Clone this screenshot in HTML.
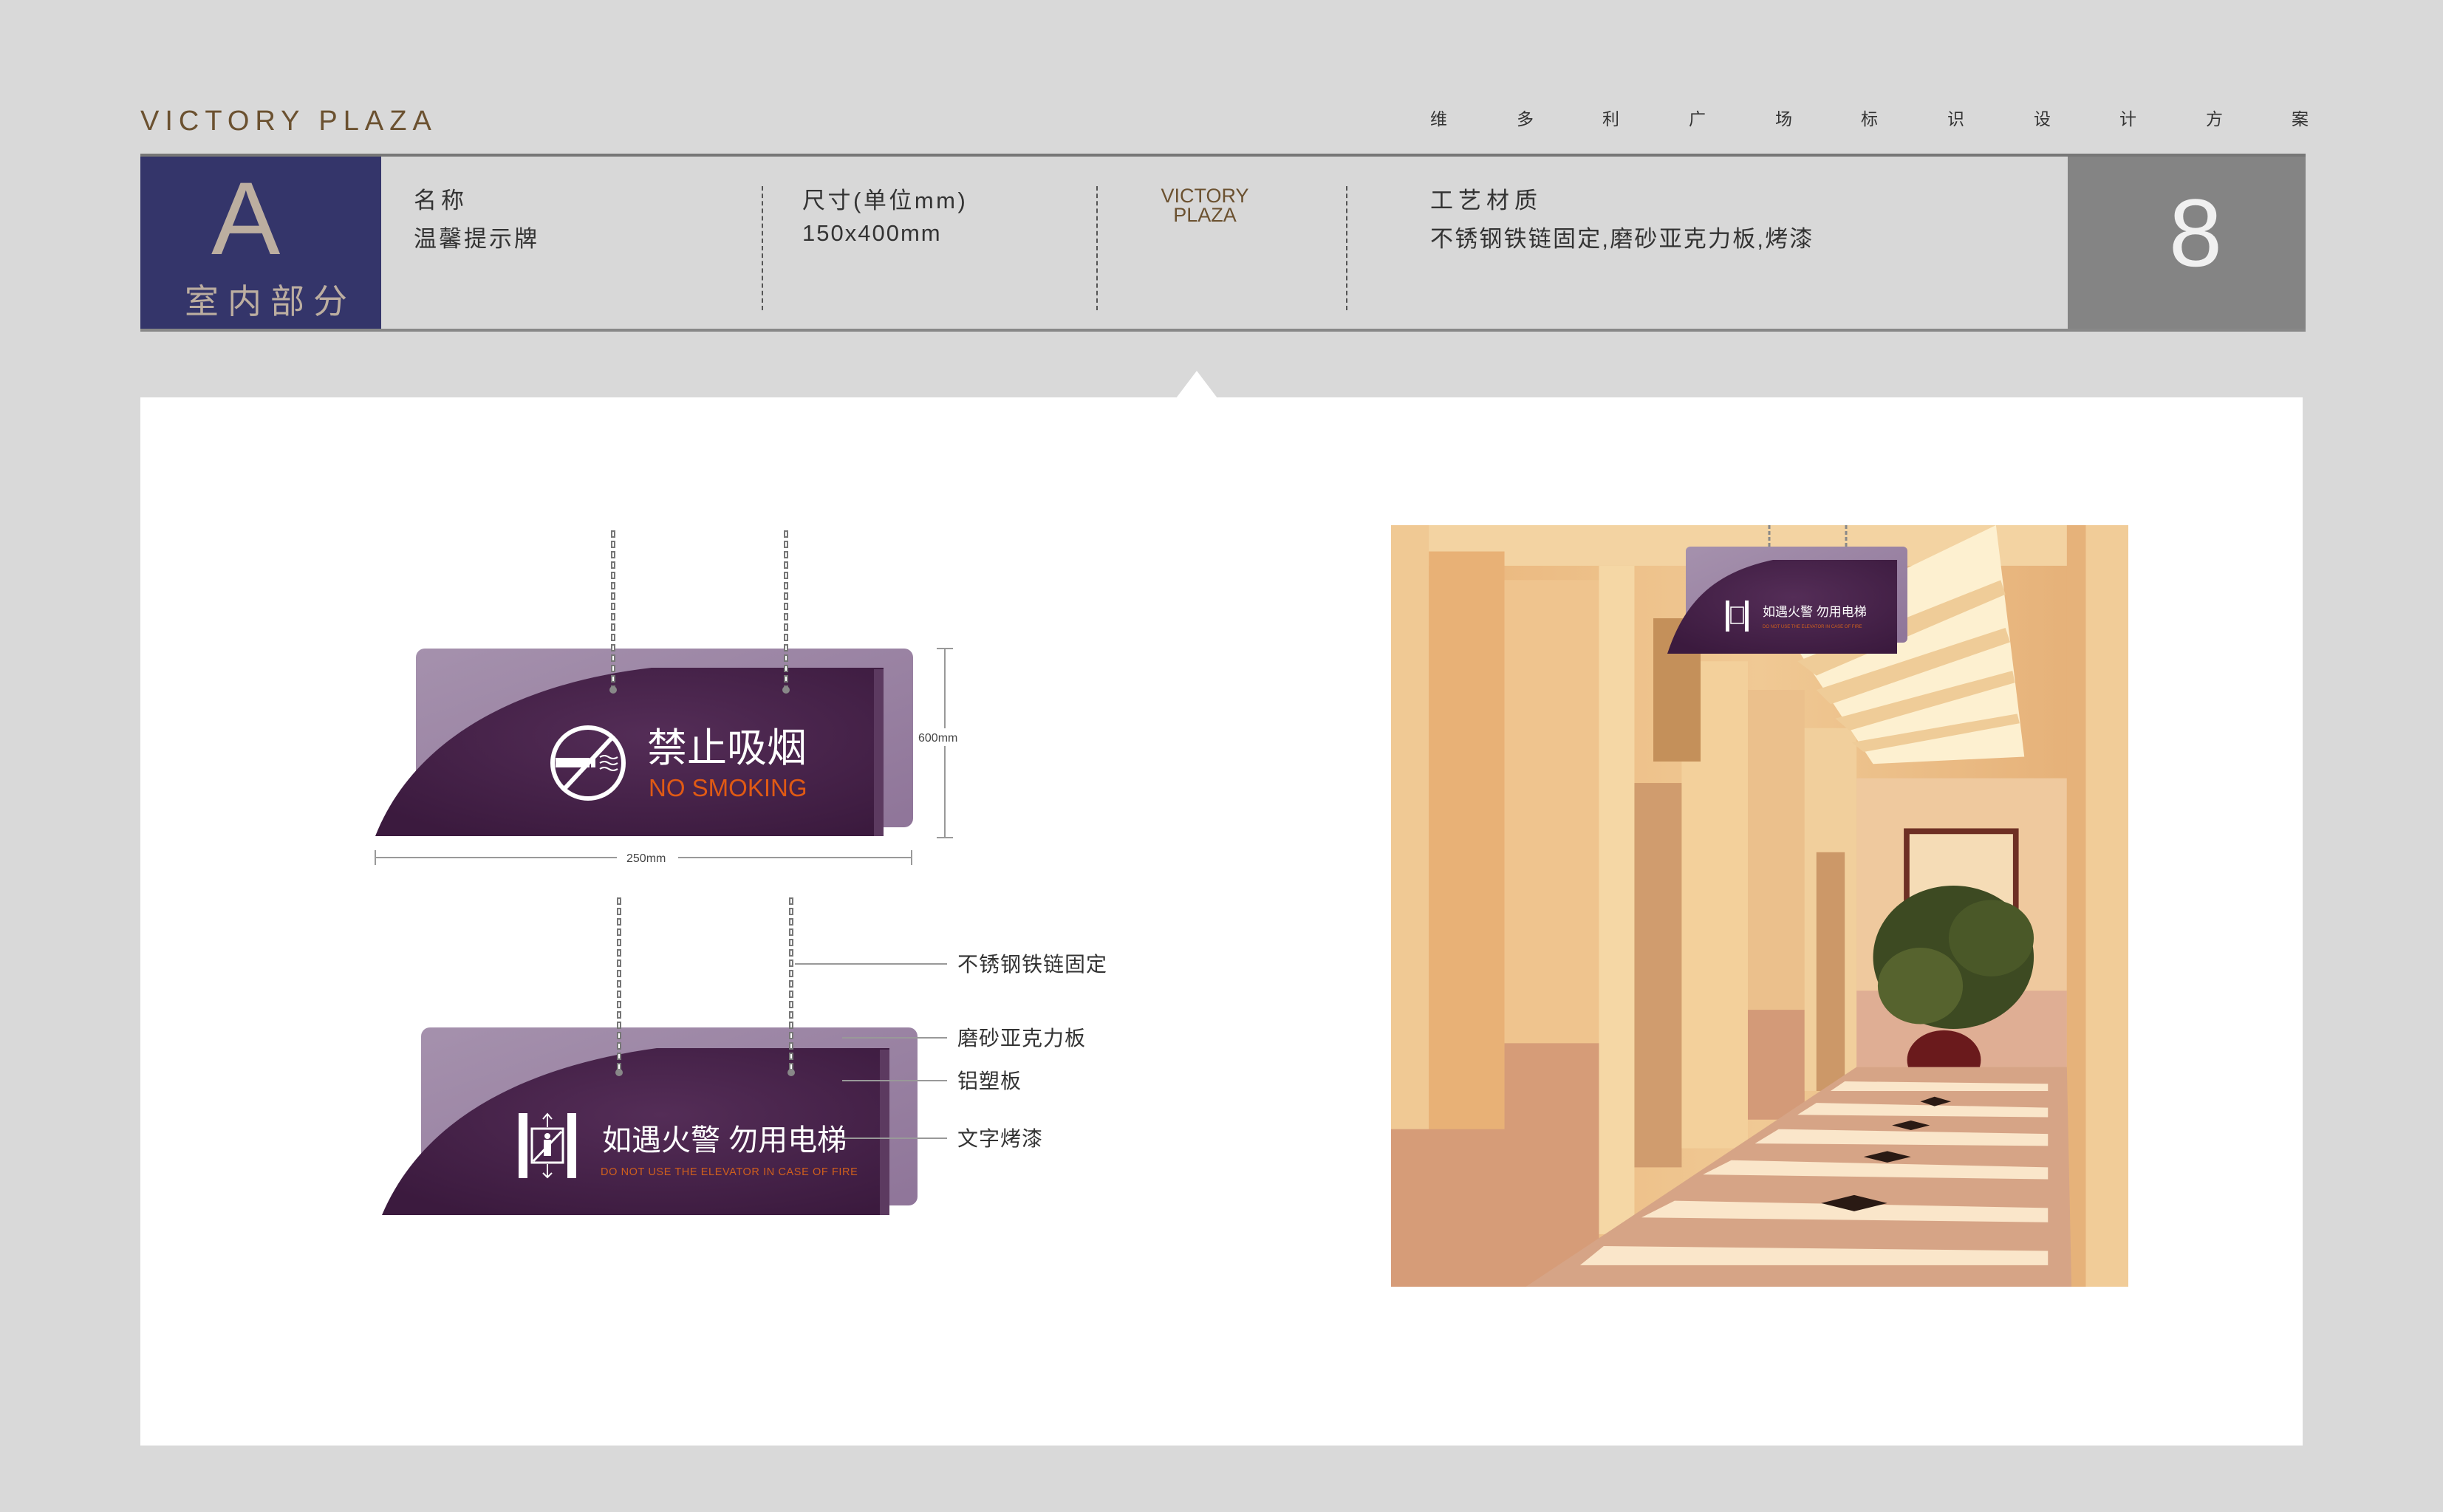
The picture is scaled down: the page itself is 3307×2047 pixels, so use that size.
<!DOCTYPE html>
<html><head><meta charset="utf-8">
<style>
*{margin:0;padding:0;box-sizing:border-box}
body{width:3307px;height:2047px;background:#d9d9d9;position:relative;overflow:hidden;font-family:"Liberation Sans","Noto Sans CJK SC",sans-serif}
.a{position:absolute;white-space:nowrap}
.cn{font-family:"Liberation Sans","Noto Sans CJK SC",sans-serif}
</style></head><body>
<div class="a" style="left:190px;top:143px;font-size:38px;letter-spacing:8px;color:#6b5130;">VICTORY PLAZA</div>
<div class="a cn" style="left:0;top:142px;font-size:23px;color:#333;">
<span class="a" style="left:1936px">维</span><span class="a" style="left:2053px">多</span><span class="a" style="left:2169px">利</span><span class="a" style="left:2286px">广</span><span class="a" style="left:2403px">场</span><span class="a" style="left:2519px">标</span><span class="a" style="left:2636px">识</span><span class="a" style="left:2753px">设</span><span class="a" style="left:2869px">计</span><span class="a" style="left:2986px">方</span><span class="a" style="left:3102px">案</span></div>

<div class="a" style="left:190px;top:208px;width:2931px;height:241px;border-top:4px solid #777;border-bottom:4px solid #888;background:#d8d8d8"></div>
<div class="a" style="left:190px;top:212px;width:326px;height:233px;background:#34356a"></div>
<div class="a" style="left:286px;top:226px;font-size:140px;color:#bcaea0;line-height:1;">A</div>
<div class="a cn" style="left:250px;top:372px;font-size:46px;letter-spacing:12px;color:#bcaea0;">室内部分</div>
<div class="a cn" style="left:560px;top:246px;font-size:31px;letter-spacing:6px;color:#333">名称</div>
<div class="a cn" style="left:560px;top:298px;font-size:31px;letter-spacing:3px;color:#333">温馨提示牌</div>
<div class="a" style="left:1031px;top:252px;height:168px;border-left:2px dashed #555"></div>
<div class="a cn" style="left:1086px;top:246px;font-size:31px;letter-spacing:3.5px;color:#333">尺寸(单位mm)</div>
<div class="a" style="left:1086px;top:298px;font-size:31px;letter-spacing:2px;color:#333">150x400mm</div>
<div class="a" style="left:1484px;top:252px;height:168px;border-left:2px dashed #555"></div>
<div class="a" style="left:1560px;top:252px;width:142px;font-size:27px;line-height:26px;color:#6b5130;text-align:center">VICTORY<br>PLAZA</div>
<div class="a" style="left:1822px;top:252px;height:168px;border-left:2px dashed #555"></div>
<div class="a cn" style="left:1936px;top:246px;font-size:31px;letter-spacing:7px;color:#333">工艺材质</div>
<div class="a cn" style="left:1936px;top:298px;font-size:31px;letter-spacing:2.2px;color:#333">不锈钢铁链固定,磨砂亚克力板,烤漆</div>
<div class="a" style="left:2799px;top:212px;width:322px;height:233px;background:#848484"></div>
<div class="a" style="left:2799px;top:244px;width:346px;text-align:center;font-size:130px;color:#f0f0f0;line-height:1.1">8</div>

<div class="a" style="left:190px;top:538px;width:2927px;height:1419px;background:#fff"></div>
<div class="a" style="left:1592px;top:502px;width:0;height:0;border-left:28px solid transparent;border-right:28px solid transparent;border-bottom:37px solid #fff"></div>

<svg class="a" style="left:0;top:0" width="3307" height="2047" viewBox="0 0 3307 2047">
<defs>
<radialGradient id="pg" cx="0.55" cy="0.4" r="0.7"><stop offset="0" stop-color="#542d57"/><stop offset="1" stop-color="#3b1a3e"/></radialGradient>
<linearGradient id="bk" x1="0" y1="0" x2="1" y2="1"><stop offset="0" stop-color="#a591ad"/><stop offset="1" stop-color="#8f7599"/></linearGradient>
<linearGradient id="wall" x1="0" y1="0" x2="1" y2="0"><stop offset="0" stop-color="#e9b47a"/><stop offset="0.5" stop-color="#f0c994"/><stop offset="1" stop-color="#e4ad74"/></linearGradient>
</defs>

<!-- sign 1 -->
<rect x="563" y="878" width="673" height="242" rx="12" fill="url(#bk)"/>
<path d="M508,1132 C560,1000 700,925 882,904 L1196,904 L1196,1132 Z" fill="url(#pg)"/>
<rect x="1183" y="906" width="13" height="226" fill="#5c3a60"/>
<g stroke-width="6" stroke-dasharray="10 4" stroke="#777"><line x1="830" y1="718" x2="830" y2="930"/><line x1="1064" y1="718" x2="1064" y2="930"/></g>
<g stroke-width="2" stroke-dasharray="6 8" stroke="#fff"><line x1="830" y1="720" x2="830" y2="930"/><line x1="1064" y1="720" x2="1064" y2="930"/></g>
<circle cx="830" cy="934" r="5" fill="#888"/><circle cx="1064" cy="934" r="5" fill="#888"/>
<circle cx="796" cy="1033" r="48" fill="none" stroke="#fff" stroke-width="6"/>
<rect x="752" y="1026" width="46" height="13" fill="#fff"/><rect x="800" y="1026" width="6" height="13" fill="#fff"/>
<path d="M812,1025 q6,-4 12,0 t12,0 M812,1033 q6,-4 12,0 t12,0 M812,1041 q6,-4 12,0 t12,0" stroke="#fff" stroke-width="2" fill="none"/>
<line x1="763" y1="1069" x2="830" y2="997" stroke="#fff" stroke-width="6"/>
<text x="876" y="1031" font-size="54" fill="#fff" font-family="Liberation Sans,Noto Sans CJK SC,sans-serif">禁止吸烟</text>
<text x="878" y="1078" font-size="33" fill="#e05a14" font-family="Liberation Sans,sans-serif">NO SMOKING</text>
<line x1="1279" y1="878" x2="1279" y2="1134" stroke="#999" stroke-width="2"/>
<line x1="1268" y1="878" x2="1290" y2="878" stroke="#999" stroke-width="2"/><line x1="1268" y1="1134" x2="1290" y2="1134" stroke="#999" stroke-width="2"/>
<rect x="1240" y="986" width="70" height="24" fill="#fff"/>
<text x="1243" y="1004" font-size="16" fill="#444" font-family="Liberation Sans,sans-serif">600mm</text>
<line x1="508" y1="1161" x2="835" y2="1161" stroke="#999" stroke-width="2"/><line x1="918" y1="1161" x2="1234" y2="1161" stroke="#999" stroke-width="2"/>
<line x1="508" y1="1151" x2="508" y2="1171" stroke="#999" stroke-width="2"/><line x1="1234" y1="1151" x2="1234" y2="1171" stroke="#999" stroke-width="2"/>
<text x="848" y="1167" font-size="16" fill="#444" font-family="Liberation Sans,sans-serif">250mm</text>

<!-- sign 2 -->
<rect x="570" y="1391" width="672" height="241" rx="12" fill="url(#bk)"/>
<path d="M517,1645 C570,1520 700,1445 889,1419 L1204,1419 L1204,1645 Z" fill="url(#pg)"/>
<rect x="1191" y="1421" width="13" height="224" fill="#5c3a60"/>
<g stroke-width="6" stroke-dasharray="10 4" stroke="#777"><line x1="838" y1="1215" x2="838" y2="1448"/><line x1="1071" y1="1215" x2="1071" y2="1448"/></g>
<g stroke-width="2" stroke-dasharray="6 8" stroke="#fff"><line x1="838" y1="1217" x2="838" y2="1448"/><line x1="1071" y1="1217" x2="1071" y2="1448"/></g>
<circle cx="838" cy="1452" r="5" fill="#888"/><circle cx="1071" cy="1452" r="5" fill="#888"/>
<rect x="702" y="1507" width="12" height="88" fill="#fff"/><rect x="768" y="1507" width="12" height="88" fill="#fff"/>
<rect x="720" y="1528" width="42" height="46" fill="none" stroke="#fff" stroke-width="3"/>
<path d="M741,1508 V1526 M735,1515 L741,1508 747,1515 M741,1576 V1594 M735,1588 L741,1594 747,1588" stroke="#fff" stroke-width="2" fill="none"/>
<circle cx="741" cy="1538" r="4" fill="#fff"/><rect x="736" y="1543" width="10" height="22" fill="#fff"/>
<line x1="722" y1="1572" x2="760" y2="1532" stroke="#fff" stroke-width="3"/>
<text x="815" y="1557" font-size="40" fill="#fff" font-family="Liberation Sans,Noto Sans CJK SC,sans-serif">如遇火警  勿用电梯</text>
<text x="813" y="1591" font-size="14.5" fill="#d0601c" font-family="Liberation Sans,sans-serif" letter-spacing="0.6">DO NOT USE THE ELEVATOR IN CASE OF FIRE</text>

<g stroke="#999" stroke-width="2">
<line x1="1076" y1="1305" x2="1282" y2="1305"/>
<line x1="1140" y1="1405" x2="1282" y2="1405"/>
<line x1="1140" y1="1463" x2="1282" y2="1463"/>
<line x1="1140" y1="1541" x2="1282" y2="1541"/>
</g>
<g font-size="28" fill="#333" font-family="Liberation Sans,Noto Sans CJK SC,sans-serif" letter-spacing="1">
<text x="1296" y="1315">不锈钢铁链固定</text>
<text x="1296" y="1415">磨砂亚克力板</text>
<text x="1296" y="1473">铝塑板</text>
<text x="1296" y="1551">文字烤漆</text>
</g>

<!-- photo -->
<svg x="1883" y="711" width="998" height="1031" viewBox="0 15 1560 1595" preserveAspectRatio="none">
<rect y="0" width="1560" height="1620" fill="url(#wall)"/>
<rect x="0" y="0" width="1560" height="100" fill="#f3d3a2"/>
<rect x="0" y="0" width="80" height="1620" fill="#f0c994"/>
<rect x="80" y="70" width="160" height="1220" fill="#e8b176"/>
<rect x="240" y="130" width="200" height="1000" fill="#efc48e"/>
<rect x="240" y="1100" width="200" height="520" fill="#d69c78"/>
<rect x="0" y="1280" width="440" height="340" fill="#d69c78"/>
<rect x="440" y="100" width="75" height="1400" fill="#f5d7a5"/>
<rect x="515" y="555" width="100" height="805" fill="#d09c6e"/>
<rect x="615" y="300" width="140" height="1020" fill="#f3d09b"/>
<rect x="555" y="210" width="100" height="300" fill="#c4905a"/>
<rect x="755" y="360" width="120" height="900" fill="#ebc08c"/>
<rect x="755" y="1030" width="120" height="230" fill="#d39a78"/>
<rect x="875" y="440" width="110" height="760" fill="#f1cf9c"/>
<rect x="900" y="700" width="60" height="500" fill="#cc9868"/>
<polygon points="830,230 1280,15 1340,500 1020,515" fill="#fdf0d0"/>
<g fill="#efcc98">
<polygon points="860,300 1290,130 1300,160 900,330"/>
<polygon points="900,360 1300,230 1310,260 930,390"/>
<polygon points="940,420 1315,320 1320,345 970,445"/>
<polygon points="975,470 1325,410 1330,430 1000,490"/>
</g>
<rect x="985" y="545" width="445" height="605" fill="#efc99e"/>
<rect x="1085" y="650" width="243" height="280" fill="#6e2f24"/>
<rect x="1097" y="662" width="219" height="256" fill="#f5dcb6"/>
<rect x="985" y="990" width="445" height="160" fill="#dfae94"/>
<ellipse cx="1190" cy="920" rx="170" ry="150" fill="#3d4a22"/>
<ellipse cx="1120" cy="980" rx="90" ry="80" fill="#56632e"/>
<ellipse cx="1270" cy="880" rx="90" ry="80" fill="#4a5828"/>
<ellipse cx="1170" cy="1135" rx="78" ry="62" fill="#6a1a1c"/>
<rect x="1430" y="0" width="130" height="1620" fill="#e6b27a"/>
<rect x="1470" y="0" width="90" height="1620" fill="#f1cc98"/>
<polygon points="270,1620 985,1150 1430,1150 1440,1620" fill="#d6a486"/>
<g fill="#fae6ca">
<polygon points="960,1180 1390,1185 1390,1200 930,1200"/>
<polygon points="900,1225 1390,1235 1390,1255 860,1250"/>
<polygon points="820,1280 1390,1290 1390,1315 770,1310"/>
<polygon points="720,1345 1390,1360 1390,1385 660,1375"/>
<polygon points="600,1430 1390,1445 1390,1475 530,1465"/>
<polygon points="450,1525 1390,1535 1390,1565 400,1565"/>
</g>
<g fill="#2a1a14"><polygon points="1120,1222 1150,1212 1185,1222 1150,1232"/><polygon points="1060,1272 1100,1262 1140,1272 1100,1282"/><polygon points="1000,1338 1050,1326 1100,1338 1050,1350"/><polygon points="910,1435 980,1418 1050,1435 980,1452"/></g>
</svg>

<!-- sign in photo -->
<line x1="2395" y1="711" x2="2395" y2="780" stroke="#888" stroke-width="3" stroke-dasharray="5 3"/>
<line x1="2499" y1="711" x2="2499" y2="780" stroke="#888" stroke-width="3" stroke-dasharray="5 3"/>
<rect x="2282" y="740" width="300" height="130" rx="6" fill="url(#bk)"/>
<path d="M2257,885 C2280,815 2320,775 2400,758 L2568,758 L2568,885 Z" fill="url(#pg)"/>
<rect x="2336" y="813" width="5" height="42" fill="#fff"/><rect x="2362" y="813" width="5" height="42" fill="#fff"/>
<rect x="2343" y="822" width="17" height="22" fill="none" stroke="#fff" stroke-width="1.5"/>
<text x="2386" y="834" font-size="17" fill="#fff" font-family="Liberation Sans,Noto Sans CJK SC,sans-serif">如遇火警  勿用电梯</text>
<text x="2386" y="850" font-size="6" fill="#d0601c" font-family="Liberation Sans,sans-serif">DO NOT USE THE ELEVATOR IN CASE OF FIRE</text>
</svg>
</body></html>
